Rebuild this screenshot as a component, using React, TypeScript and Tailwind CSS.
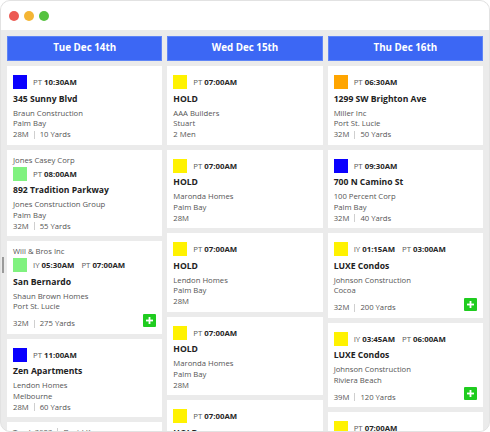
import React from "react";

type T = { l: string; t: string };
type CardData = {
  company?: string;
  color?: string;
  times?: T[];
  title?: string;
  lines?: string[];
  meta?: string[];
  plus?: boolean;
};

const BLUE = "#0a00ff";
const YELLOW = "#fff200";
const ORANGE = "#ffa500";
const GREEN = "#80f27f";

const cols: { head: string; cards: CardData[] }[] = [
  {
    head: "Tue Dec 14th",
    cards: [
      { color: BLUE, times: [{ l: "PT", t: "10:30AM" }], title: "345 Sunny Blvd", lines: ["Braun Construction", "Palm Bay"], meta: ["28M", "10 Yards"] },
      { company: "Jones Casey Corp", color: GREEN, times: [{ l: "PT", t: "08:00AM" }], title: "892 Tradition Parkway", lines: ["Jones Construction Group", "Palm Bay"], meta: ["32M", "55 Yards"] },
      { company: "Will & Bros Inc", color: GREEN, times: [{ l: "IY", t: "05:30AM" }, { l: "PT", t: "07:00AM" }], title: "San Bernardo", lines: ["Shaun Brown Homes", "Port St. Lucie"], meta: ["32M", "275 Yards"], plus: true },
      { color: BLUE, times: [{ l: "PT", t: "11:00AM" }], title: "Zen Apartments", lines: ["Lendon Homes", "Melbourne"], meta: ["28M", "60 Yards"] },
      { company: "Truck 3903|David K" },
    ],
  },
  {
    head: "Wed Dec 15th",
    cards: [
      { color: YELLOW, times: [{ l: "PT", t: "07:00AM" }], title: "HOLD", lines: ["AAA Builders", "Stuart"], meta: ["2 Men"] },
      { color: YELLOW, times: [{ l: "PT", t: "07:00AM" }], title: "HOLD", lines: ["Maronda Homes", "Palm Bay"], meta: ["28M"] },
      { color: YELLOW, times: [{ l: "PT", t: "07:00AM" }], title: "HOLD", lines: ["Lendon Homes", "Palm Bay"], meta: ["28M"] },
      { color: YELLOW, times: [{ l: "PT", t: "07:00AM" }], title: "HOLD", lines: ["Maronda Homes", "Palm Bay"], meta: ["28M"] },
      { color: YELLOW, times: [{ l: "PT", t: "07:00AM" }], title: "HOLD", lines: ["Maronda Homes", "Palm Bay"], meta: ["28M"] },
    ],
  },
  {
    head: "Thu Dec 16th",
    cards: [
      { color: ORANGE, times: [{ l: "PT", t: "06:30AM" }], title: "1299 SW Brighton Ave", lines: ["Miller Inc", "Port St. Lucie"], meta: ["32M", "50 Yards"] },
      { color: BLUE, times: [{ l: "PT", t: "09:30AM" }], title: "700 N Camino St", lines: ["100 Percent Corp", "Palm Bay"], meta: ["32M", "40 Yards"] },
      { color: YELLOW, times: [{ l: "IY", t: "01:15AM" }, { l: "PT", t: "03:00AM" }], title: "LUXE Condos", lines: ["Johnson Construction", "Cocoa"], meta: ["32M", "200 Yards"], plus: true },
      { color: YELLOW, times: [{ l: "IY", t: "03:45AM" }, { l: "PT", t: "06:00AM" }], title: "LUXE Condos", lines: ["Johnson Construction", "Riviera Beach"], meta: ["39M", "120 Yards"], plus: true },
      { color: YELLOW, times: [{ l: "PT", t: "07:00AM" }], title: "HOLD", lines: ["Maronda Homes", "Palm Bay"], meta: ["28M"] },
    ],
  },
];

function Meta({ items }: { items: string[] }) {
  return (
    <div className="flex items-center text-[7.7px] leading-[10.5px] text-[#555]">
      {items.map((m, i) => (
        <React.Fragment key={i}>
          {i > 0 && <span className="mx-[5px] h-[8px] w-px bg-[#cfcfcf]" />}
          <span>{m}</span>
        </React.Fragment>
      ))}
    </div>
  );
}

function Plus() {
  return (
    <div className="mb-[2px] flex h-[13px] w-[13px] items-center justify-center rounded-[1px] bg-[#1fcc1f]">
      <svg width="7" height="7" viewBox="0 0 7 7">
        <rect x="2.6" y="0" width="1.8" height="7" fill="#fff" />
        <rect x="0" y="2.6" width="7" height="1.8" fill="#fff" />
      </svg>
    </div>
  );
}

function Card({ c }: { c: CardData }) {
  const hasRow = !!c.times;
  return (
    <div className={`bg-white px-[6px] pb-[4.75px] ${c.company ? "pt-[5px]" : "pt-[9px]"}`}>
      {c.company && (
        <div className="mb-[2px] flex items-center text-[7.7px] leading-[10px] text-[#555]">
          {c.company.split("|").map((p, i) => (
            <React.Fragment key={i}>
              {i > 0 && <span className="mx-[5px] h-[8px] w-px bg-[#cfcfcf]" />}
              <span>{p}</span>
            </React.Fragment>
          ))}
        </div>
      )}
      {hasRow && (
        <div className="flex h-[14px] items-center">
          <div className="h-[14px] w-[14px] shrink-0" style={{ backgroundColor: c.color }} />
          <div className="ml-[6px] flex items-center gap-[7px] text-[7.8px] leading-[10px]">
            {c.times!.map((t, i) => (
              <span key={i}>
                <span className="text-[#5a5a5a]">{t.l} </span>
                <span className="font-bold text-[#262626]">{t.t}</span>
              </span>
            ))}
          </div>
        </div>
      )}
      {c.title && (
        <div className="mt-[3.5px] text-[8.6px] font-bold leading-[13px] text-[#222]">{c.title}</div>
      )}
      {c.lines && (
        <div className="mt-[2.25px] text-[7.7px] leading-[10.5px] text-[#555]">
          {c.lines.map((l, i) => (
            <div key={i}>{l}</div>
          ))}
        </div>
      )}
      {c.meta &&
        (c.plus ? (
          <div className="mt-[2px] flex items-end justify-between">
            <Meta items={c.meta} />
            <Plus />
          </div>
        ) : (
          <div className="mt-[0.5px]">
            <Meta items={c.meta} />
          </div>
        ))}
    </div>
  );
}

export default function App() {
  return (
    <div className="h-[432px] w-[490px] bg-white font-['Open_Sans',sans-serif]">
      <div className="relative flex h-full w-full flex-col overflow-hidden rounded-[10px] border border-[#e2e2e2] bg-[#ebebeb]">
        <div className="flex h-[29px] shrink-0 items-center gap-[5px] bg-white pl-[8px]">
          <span className="h-[10px] w-[10px] rounded-full bg-[#ec5a53]" />
          <span className="h-[10px] w-[10px] rounded-full bg-[#f4b534]" />
          <span className="h-[10px] w-[10px] rounded-full bg-[#55c23f]" />
        </div>
        <div className="grid flex-1 grid-cols-3 gap-[5px] overflow-hidden px-[6px] pt-[6px]">
          {cols.map((col, ci) => (
            <div key={ci} className="flex flex-col gap-[5px]">
              <div className="flex h-[25px] shrink-0 items-center justify-center border border-[#5f85f6] bg-[#3c67f4] text-[9.8px] font-bold text-white">
                {col.head}
              </div>
              {col.cards.map((c, i) => (
                <Card key={i} c={c} />
              ))}
            </div>
          ))}
        </div>
        <div className="absolute left-[1px] top-[256px] h-[16px] w-[1.5px] bg-[#9a9a9a]" />
      </div>
    </div>
  );
}
